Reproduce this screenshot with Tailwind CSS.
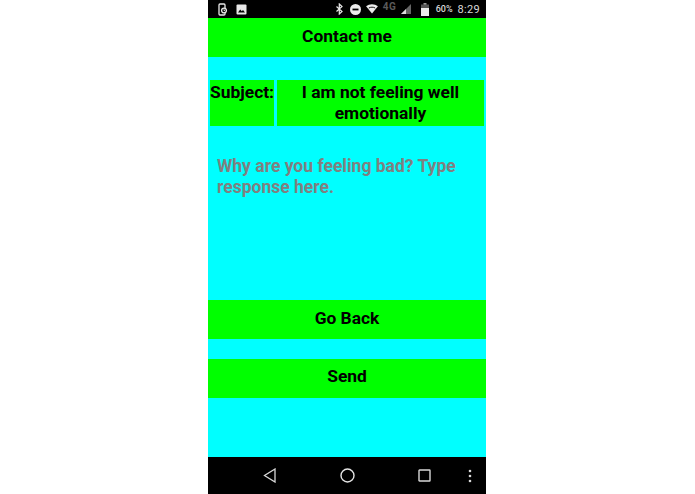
<!DOCTYPE html>
<html lang="en">
<head>
    <meta charset="UTF-8">
    <title>Contact me</title>
    <script src="https://cdn.jsdelivr.net/npm/@tailwindcss/browser@4"></script>
</head>
<body class="bg-white font-['Roboto',sans-serif] overflow-hidden">
    <div class="w-[278px] h-[494px] ml-[208px] bg-[#00ffff] flex flex-col">
        <!-- status bar -->
        <div class="h-[18px] bg-black flex items-center pl-[10px] pr-[6px] text-[#d8d8d8] shrink-0">
            <svg width="9" height="13" viewBox="0 0 9 13" fill="none" stroke="#e8e8e8" stroke-width="1.3"><rect x="1" y="1" width="6" height="11" rx="1"/><circle cx="6" cy="7.5" r="2.4" fill="#000"/><path d="M6 6.200v1.400h1.100" stroke-width="0.9"/></svg>
            <svg class="ml-[9px]" width="11" height="11" viewBox="0 0 11 11"><rect x="0.5" y="0.5" width="10" height="10" rx="1" fill="#e8e8e8"/><path d="M2 8.5l2.2-3 1.600 1.800 1.200-1.200 2 2.400z" fill="#000"/></svg>
            <svg class="ml-auto" width="7" height="12" viewBox="0 0 7 12" fill="none" stroke="#e8e8e8" stroke-width="1.2"><path d="M0.5 3.500l5.500 5L3.300 11V1L6 3.500l-5.500 5"/></svg>
            <svg class="ml-[7px]" width="11" height="11" viewBox="0 0 11 11"><circle cx="5.500" cy="5.500" r="5.500" fill="#ececec"/><rect x="2.500" y="4.600" width="6" height="1.800" fill="#000"/></svg>
            <svg class="ml-[5px]" width="12" height="10" viewBox="0 0 13 11"><path d="M0 2.500C3.500-.6 9.500-.6 13 2.500L6.500 10.500z" fill="#ececec"/><path d="M3 4.400c2-1.200 5-1.200 7 0" stroke="#000" stroke-width="1" fill="none"/></svg>
            <span class="ml-[5px] w-[18px] text-[10px] leading-none text-[#5a5a5a] font-bold mb-[4px] tracking-[0.5px]">4G</span>
            <svg width="10" height="10" viewBox="0 0 10 10"><path d="M0 10L10 0v10z" fill="#666"/><path d="M0 10l5-5v5z" fill="#ddd"/></svg>
            <svg class="ml-[10px]" width="8" height="13" viewBox="0 0 8 13"><rect x="2.500" y="0" width="3" height="2" fill="#999"/><rect x="0" y="1.500" width="8" height="11.500" fill="#555"/><rect x="0" y="5" width="8" height="8" fill="#ececec"/></svg>
            <span class="ml-[7px] text-[9px] font-medium leading-none">60%</span>
            <span class="ml-[5px] text-[11px] leading-none tracking-[0.3px]">8:29</span>
        </div>

        <div class="h-[39px] bg-[#00ff00] flex items-center justify-center pb-[2px] text-[17.400px] font-bold text-black shrink-0">Contact me</div>

        <div class="flex gap-[3px] mt-[23px] px-[2px] h-[46px] shrink-0 text-[17.400px] leading-[21px] font-bold text-black">
            <div class="w-[64px] bg-[#00ff00] pt-[2px] whitespace-nowrap">Subject:</div>
            <div class="flex-1 bg-[#00ff00] pt-[2px] text-center">I am not feeling well emotionally</div>
        </div>

        <div class="h-[174px] pt-[30px] pl-[9px] pr-[8px] shrink-0 text-[17.500px] leading-[21px] font-bold text-[#808080]">Why are you feeling bad? Type response here.</div>

        <div class="h-[39px] bg-[#00ff00] flex items-center justify-center pb-[2px] text-[17.400px] font-bold text-black shrink-0">Go Back</div>
        <div class="h-[39px] mt-[20px] bg-[#00ff00] flex items-center justify-center pb-[4px] text-[17.400px] font-bold text-black shrink-0">Send</div>

        <div class="flex-1"></div>

        <!-- nav bar -->
        <div class="h-[37px] bg-black shrink-0 flex items-center">
            <svg class="ml-[55px]" width="13" height="15" viewBox="0 0 13 15" fill="none" stroke="#d8d8d8" stroke-width="1.300"><path d="M12 1L1.500 7.500 12 14z"/></svg>
            <svg class="ml-[64px]" width="15" height="15" viewBox="0 0 15 15" fill="none" stroke="#e4e4e4" stroke-width="1.400"><circle cx="7.500" cy="7.500" r="6.500"/></svg>
            <svg class="ml-[63px]" width="13" height="13" viewBox="0 0 13 13" fill="none" stroke="#d8d8d8" stroke-width="1.400"><rect x="1" y="1" width="11" height="11" rx="0.5"/></svg>
            <svg class="ml-[37px]" width="4" height="14" viewBox="0 0 4 14" fill="#d8d8d8"><circle cx="2" cy="2" r="1.300"/><circle cx="2" cy="7" r="1.300"/><circle cx="2" cy="12" r="1.300"/></svg>
        </div>
    </div>
</body>
</html>
